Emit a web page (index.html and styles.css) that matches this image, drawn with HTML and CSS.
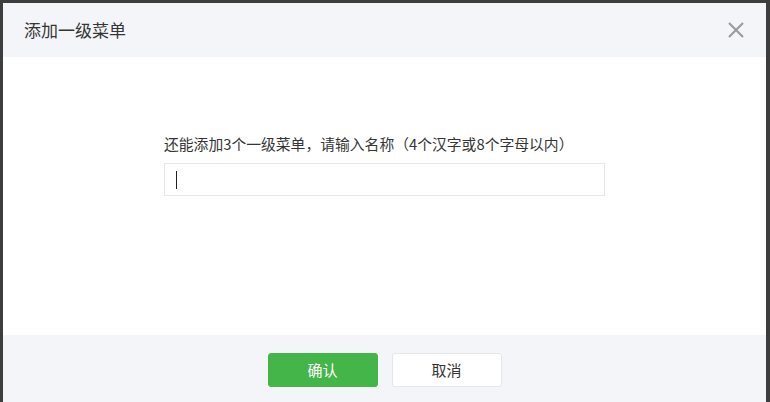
FILE: index.html
```html
<!DOCTYPE html>
<html lang="zh-CN">
<head>
<meta charset="utf-8">
<title>添加一级菜单</title>
<link rel="stylesheet" href="styles.css">
</head>
<body>
<div class="dialog">
  <div class="dialog-hd">
    <h3 class="dialog-title">添加一级菜单</h3>
    <span class="dialog-close" aria-label="关闭">
      <svg width="16" height="16" viewBox="0 0 16 16"><path d="M1 1L15 15M15 1L1 15" stroke="#9c9c9c" stroke-width="2.2" fill="none"/></svg>
    </span>
  </div>
  <div class="dialog-bd">
    <div class="form">
      <p class="tips">还能添加3个一级菜单<span class="punct">，</span>请输入名称<span class="punct">（</span>4个汉字或8个字母以内<span class="punct">）</span></p>
      <div class="input-box"><span class="caret"></span></div>
    </div>
  </div>
  <div class="dialog-ft">
    <button class="btn btn-primary">确认</button>
    <button class="btn btn-default">取消</button>
  </div>
</div>
</body>
</html>
```
FILE: styles.css
```css
html, body {
  margin: 0;
  padding: 0;
  height: 100%;
}
body {
  background: #3d3d3d;
  padding: 3px 4px 0 3px;
  box-sizing: border-box;
  font-family: "Noto Sans CJK SC", "Noto Sans", sans-serif;
  color: #353535;
  overflow: hidden;
}
.dialog {
  background: #fff;
  height: 100%;
  display: flex;
  flex-direction: column;
}
.dialog-hd {
  height: 54px;
  background: #f4f5f9;
  display: flex;
  align-items: center;
  justify-content: space-between;
  padding: 0 22px 0 21px;
  flex: none;
}
.dialog-title {
  margin: 0;
  font-size: 17px;
  font-weight: normal;
  line-height: 24px;
  color: #353535;
}
.dialog-close {
  display: flex;
  width: 16px;
  height: 16px;
}
.dialog-bd {
  height: 278px;
  flex: none;
  display: flex;
  justify-content: center;
}
.form {
  width: 441px;
  padding-top: 76px;
}
.tips {
  margin: 0 0 9px;
  font-size: 14.8px;
  line-height: 21px;
  color: #353535;
  white-space: nowrap;
}
.punct {
  font-family: "Noto Sans CJK TC", "Noto Sans CJK SC", sans-serif;
}
.input-box {
  height: 31px;
  border: 1px solid #e7e7eb;
  display: flex;
  align-items: center;
  padding-left: 11px;
}
.caret {
  width: 1px;
  height: 18px;
  background: #222;
}
.dialog-ft {
  flex: 1;
  background: #f4f5f9;
  display: flex;
  justify-content: center;
  align-items: flex-start;
  gap: 14px;
  padding-top: 18px;
}
.btn {
  width: 110px;
  height: 34px;
  border-radius: 3px;
  font-family: inherit;
  font-size: 15px;
  line-height: 32px;
  padding: 0;
  cursor: pointer;
}
.btn-primary {
  background: #44b549;
  border: 1px solid #44b549;
  color: #fff;
}
.btn-default {
  background: #fff;
  border: 1px solid #e4e8eb;
  color: #353535;
}
```
